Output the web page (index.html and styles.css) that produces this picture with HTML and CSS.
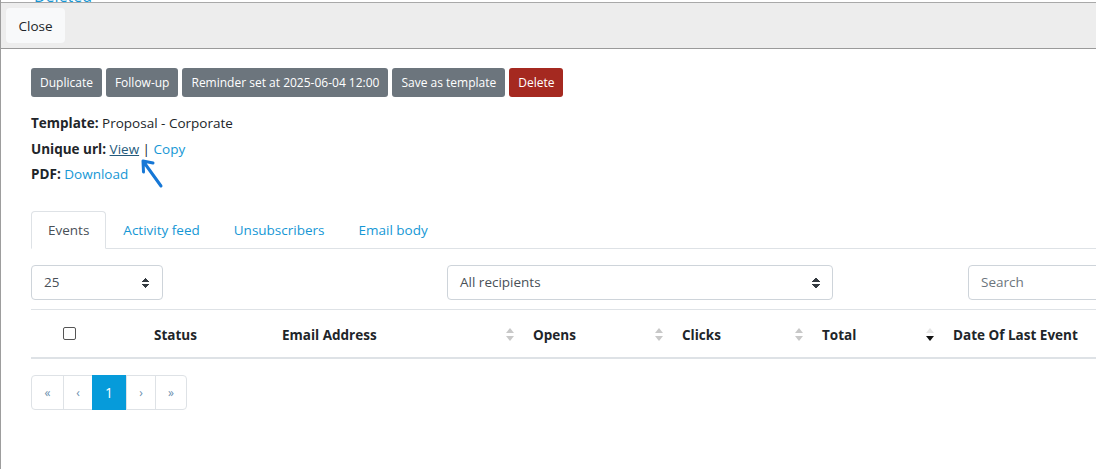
FILE: index.html
```html
<html>
    <head>
        <title>Campaign</title>
        <link rel="stylesheet" href="styles.css">
    </head>
    <body>
        <div class="frame">
            <div class="peek"><span>Deleted</span></div>
            <div class="toolbar">
                <button class="btn-light">Close</button>
            </div>

            <div class="content">
                <div class="actions">
                    <button class="btn">Duplicate</button>
                    <button class="btn">Follow-up</button>
                    <button class="btn">Reminder set at 2025-06-04 12:00</button>
                    <button class="btn">Save as template</button>
                    <button class="btn btn-danger">Delete</button>
                </div>

                <div class="meta">
                    <div><b>Template:</b> Proposal - Corporate</div>
                    <div><b>Unique url:</b> <a href="#" class="visited">View</a> | <a href="#">Copy</a></div>
                    <div><b>PDF:</b> <a href="#">Download</a></div>
                </div>

                <svg class="pointer" width="30" height="36" viewBox="0 0 30 36">
                    <path d="M6 5 L24 30 M6 5 L6.5 16 M6 5 L16 7" fill="none" stroke="#1677d6" stroke-width="3" stroke-linecap="round"/>
                </svg>

                <ul class="tabs">
                    <li class="active">Events</li>
                    <li>Activity feed</li>
                    <li>Unsubscribers</li>
                    <li>Email body</li>
                </ul>

                <div class="controls">
                    <div class="select small">25</div>
                    <div class="select">All recipients</div>
                    <div class="right"><div class="search">Search</div></div>
                </div>

                <div class="thead">
                    <div class="th check"><span class="box"></span></div>
                    <div class="th">Status</div>
                    <div class="th sort">Email Address</div>
                    <div class="th sort">Opens</div>
                    <div class="th sort">Clicks</div>
                    <div class="th sort desc">Total</div>
                    <div class="th sort">Date Of Last Event</div>
                </div>

                <div class="pager">
                    <span class="w32">&laquo;</span>
                    <span class="w29">&lsaquo;</span>
                    <span class="w34 current">1</span>
                    <span class="w29">&rsaquo;</span>
                    <span class="w32">&raquo;</span>
                </div>
            </div>
        </div>
    </body>
</html>
```

FILE: styles.css
```css
body {
    margin: 0;
    overflow: hidden;
    background: #fff;
    font-family: "Open Sans", "Noto Sans", sans-serif;
    font-size: 13.5px;
    color: #212529;
}
a {
    color: #1597d5;
    text-decoration: none;
}
a.visited {
    color: #245a7c;
    text-decoration: underline;
}
.frame {
    border-left: 1px solid #9d9d9d;
    height: 469px;
    width: 1300px;
}
.peek {
    height: 2px;
    overflow: hidden;
}
.peek span {
    display: block;
    margin-top: -14px;
    padding-left: 33px;
    font-size: 16px;
    line-height: 20px;
    color: #1597d5;
}
.toolbar {
    background: #ededed;
    border-top: 1px solid #a9a9a9;
    border-bottom: 1px solid #9a9a9a;
    height: 47px;
    padding: 5px;
    box-sizing: border-box;
}
.btn-light {
    background: #f8f9fa;
    border: none;
    border-radius: 4px;
    height: 35px;
    width: 59px;
    font-family: inherit;
    font-size: 13.5px;
    color: #212529;
}
.content {
    position: relative;
    padding: 19px 0 0 30px;
    width: 1218px;
}
.actions {
    display: flex;
    gap: 4px;
}
.btn {
    background: #6c757d;
    color: #fff;
    border: none;
    border-radius: 3px;
    height: 29px;
    padding: 0 9px;
    font-family: inherit;
    font-size: 12px;
}
.btn-danger {
    background: #a52920;
}
.meta {
    margin-top: 14px;
    line-height: 25.5px;
}
.meta b {
    font-weight: 700;
}
.pointer {
    position: absolute;
    left: 136px;
    top: 107px;
}
.tabs {
    display: flex;
    list-style: none;
    margin: 23px 0 0;
    padding: 0;
    border-bottom: 1px solid #dee2e6;
}
.tabs li {
    height: 36px;
    line-height: 36px;
    padding: 0 16px;
    margin-bottom: -1px;
    border: 1px solid transparent;
    border-radius: 4px 4px 0 0;
    color: #1597d5;
}
.tabs li.active {
    color: #495057;
    border-color: #dee2e6 #dee2e6 #fff;
}
.controls {
    display: grid;
    grid-template-columns: 386px 386px 386px;
    column-gap: 30px;
    margin-top: 16px;
}
.select, .search {
    height: 35px;
    box-sizing: border-box;
    border: 1px solid #ced4da;
    border-radius: 4px;
    padding: 0 12px;
    line-height: 33px;
    color: #495057;
    position: relative;
}
.select.small {
    width: 132px;
}
.select::after {
    content: "";
    position: absolute;
    right: 12px;
    top: 12px;
    width: 8px;
    height: 10px;
    background:
        linear-gradient(to bottom right, transparent 50%, #343a40 50%) 0 0 / 4px 4px no-repeat,
        linear-gradient(to bottom left, transparent 50%, #343a40 50%) 4px 0 / 4px 4px no-repeat,
        linear-gradient(to top right, transparent 50%, #343a40 50%) 0 6px / 4px 4px no-repeat,
        linear-gradient(to top left, transparent 50%, #343a40 50%) 4px 6px / 4px 4px no-repeat;
}
.right {
    display: flex;
    justify-content: flex-end;
}
.search {
    width: 281px;
    color: #6c757d;
}
.thead {
    display: grid;
    grid-template-columns: 111px 128px 251px 149px 140px 131px 1fr;
    margin-top: 9px;
    border-top: 1px solid #dee2e6;
    border-bottom: 2px solid #dee2e6;
    height: 47px;
    font-weight: 700;
}
.th {
    position: relative;
    padding: 0 12px;
    line-height: 50px;
}
.th.check {
    display: flex;
    padding: 17px 0 0 32px;
    box-sizing: border-box;
}
.box {
    width: 11px;
    height: 11px;
    border: 1px solid #555;
    border-radius: 2px;
}
.sort::before, .sort::after {
    content: "";
    position: absolute;
    right: 7px;
    border-left: 4px solid transparent;
    border-right: 4px solid transparent;
}
.sort::before {
    top: 18px;
    border-bottom: 5px solid #c8c8c8;
}
.sort::after {
    top: 26px;
    border-top: 5px solid #c8c8c8;
}
.sort:last-child::before, .sort:last-child::after {
    display: none;
}
.desc::before {
    border-bottom-color: #e4e4e4;
}
.desc::after {
    border-top-color: #111;
}
.pager {
    display: inline-flex;
    margin-top: 16px;
    border: 1px solid #dee2e6;
    border-radius: 4px;
    height: 35px;
    box-sizing: border-box;
}
.pager span {
    display: flex;
    align-items: center;
    justify-content: center;
    box-sizing: border-box;
    color: #6c8fae;
    font-size: 12px;
    border-left: 1px solid #dee2e6;
}
.pager span:first-child {
    border-left: none;
}
.pager .current {
    background: #069bda;
    color: #fff;
    font-size: 14px;
    margin: -1px 0;
    border-left: none;
}
.w32 { width: 31px; }
.w29 { width: 29px; }
.w34 { width: 34px; }
```
